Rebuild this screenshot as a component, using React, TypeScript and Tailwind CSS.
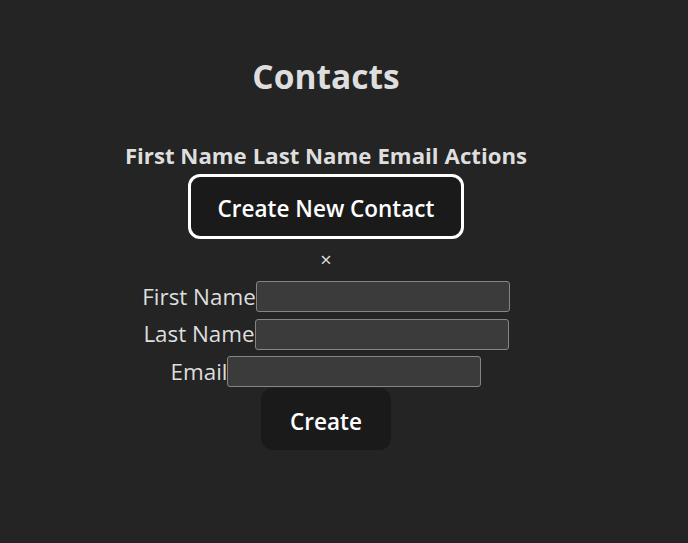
import { useState } from "react";

function Field({ label }: { label: string }) {
  const [value, setValue] = useState("");
  return (
    <div className="flex items-center justify-center">
      <label className="text-[22.4px] leading-none pt-[1px]">{label}</label>
      <input
        value={value}
        onChange={(e) => setValue(e.target.value)}
        className="w-[254px] h-[31px] bg-[#3b3b3b] border border-[#858585] rounded-[3px] px-1 text-[20px] text-white outline-none"
      />
    </div>
  );
}

export default function App() {
  const columns = ["First Name", "Last Name", "Email", "Actions"];

  return (
    <div className="min-h-screen bg-[#242424] text-[#dedede] font-['Open_Sans',sans-serif]">
      <div className="w-[652px] flex flex-col items-center pt-[53px]">
        <h2 className="text-[33.5px] font-bold leading-[46px]">Contacts</h2>

        {/* Table header */}
        <table className="mt-[44px]">
          <thead>
            <tr>
              {columns.map((col) => (
                <th key={col} className="text-[22.2px] font-bold leading-[26px] px-[3px]">
                  {col}
                </th>
              ))}
            </tr>
          </thead>
        </table>

        <button className="mt-[5px] h-[65px] pt-[4px] px-[27px] bg-[#1a1a1a] border-[3px] border-white rounded-[12px] text-[22.5px] font-semibold text-white">
          Create New Contact
        </button>

        <button className="mt-[11px] text-[20px] leading-[20px] text-[#dedede]">×</button>

        <form
          className="flex flex-col items-center gap-[6.5px] mt-[11px]"
          onSubmit={(e) => e.preventDefault()}
        >
          <Field label="First Name" />
          <Field label="Last Name" />
          <Field label="Email" />
          <button
            type="submit"
            className="-mt-[5.5px] w-[130px] h-[62px] pt-[5px] bg-[#1a1a1a] rounded-[12px] text-[22.5px] font-semibold text-white"
          >
            Create
          </button>
        </form>
      </div>
    </div>
  );
}
